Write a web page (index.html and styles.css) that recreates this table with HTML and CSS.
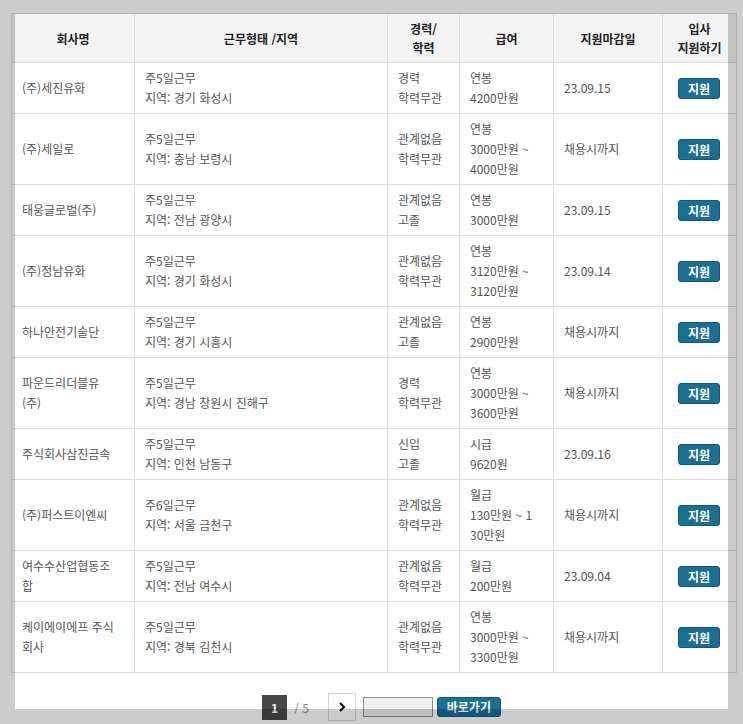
FILE: index.html
```html
<!DOCTYPE html>
<html lang="ko">
<head>
<meta charset="utf-8">
<title>채용정보</title>
<link rel="stylesheet" href="styles.css">
</head>
<body>
<div class="page">
  <table class="jobs">
    <colgroup>
      <col class="c-name"><col class="c-work"><col class="c-career"><col class="c-pay"><col class="c-date"><col class="c-apply">
    </colgroup>
    <thead>
      <tr>
        <th>회사명</th>
        <th>근무형태 /지역</th>
        <th>경력/<br>학력</th>
        <th>급여</th>
        <th>지원마감일</th>
        <th>입사<br>지원하기</th>
      </tr>
    </thead>
    <tbody>
      <tr>
        <td>(주)세진유화</td>
        <td>주5일근무<br>지역: 경기 화성시</td>
        <td>경력<br>학력무관</td>
        <td>연봉<br>4200만원</td>
        <td>23.09.15</td>
        <td class="apply"><button class="btn">지원</button></td>
      </tr>
      <tr>
        <td>(주)세일로</td>
        <td>주5일근무<br>지역: 충남 보령시</td>
        <td>관계없음<br>학력무관</td>
        <td>연봉<br>3000만원 ~<br>4000만원</td>
        <td>채용시까지</td>
        <td class="apply"><button class="btn">지원</button></td>
      </tr>
      <tr>
        <td>태웅글로벌(주)</td>
        <td>주5일근무<br>지역: 전남 광양시</td>
        <td>관계없음<br>고졸</td>
        <td>연봉<br>3000만원</td>
        <td>23.09.15</td>
        <td class="apply"><button class="btn">지원</button></td>
      </tr>
      <tr>
        <td>(주)정남유화</td>
        <td>주5일근무<br>지역: 경기 화성시</td>
        <td>관계없음<br>학력무관</td>
        <td>연봉<br>3120만원 ~<br>3120만원</td>
        <td>23.09.14</td>
        <td class="apply"><button class="btn">지원</button></td>
      </tr>
      <tr>
        <td>하나안전기술단</td>
        <td>주5일근무<br>지역: 경기 시흥시</td>
        <td>관계없음<br>고졸</td>
        <td>연봉<br>2900만원</td>
        <td>채용시까지</td>
        <td class="apply"><button class="btn">지원</button></td>
      </tr>
      <tr>
        <td>파운드리더블유<br>(주)</td>
        <td>주5일근무<br>지역: 경남 창원시 진해구</td>
        <td>경력<br>학력무관</td>
        <td>연봉<br>3000만원 ~<br>3600만원</td>
        <td>채용시까지</td>
        <td class="apply"><button class="btn">지원</button></td>
      </tr>
      <tr>
        <td>주식회사삼진금속</td>
        <td>주5일근무<br>지역: 인천 남동구</td>
        <td>신입<br>고졸</td>
        <td>시급<br>9620원</td>
        <td>23.09.16</td>
        <td class="apply"><button class="btn">지원</button></td>
      </tr>
      <tr>
        <td>(주)퍼스트이엔씨</td>
        <td>주6일근무<br>지역: 서울 금천구</td>
        <td>관계없음<br>학력무관</td>
        <td>월급<br>130만원 ~ 1<br>30만원</td>
        <td>채용시까지</td>
        <td class="apply"><button class="btn">지원</button></td>
      </tr>
      <tr>
        <td>여수수산업협동조<br>합</td>
        <td>주5일근무<br>지역: 전남 여수시</td>
        <td>관계없음<br>학력무관</td>
        <td>월급<br>200만원</td>
        <td>23.09.04</td>
        <td class="apply"><button class="btn">지원</button></td>
      </tr>
      <tr>
        <td>케이에이에프 주식<br>회사</td>
        <td>주5일근무<br>지역: 경북 김천시</td>
        <td>관계없음<br>학력무관</td>
        <td>연봉<br>3000만원 ~<br>3300만원</td>
        <td>채용시까지</td>
        <td class="apply"><button class="btn">지원</button></td>
      </tr>
    </tbody>
  </table>

  <div class="pager">
    <span class="cur">1</span>
    <span class="total">/ 5</span>
    <button class="next" aria-label="다음">
      <svg width="10" height="12" viewBox="0 0 10 12"><polyline points="3,2 7,6 3,10" fill="none" stroke="#111" stroke-width="2.2"/></svg>
    </button>
    <input class="goto" type="text">
    <button class="btn go">바로가기</button>
  </div>
</div>
<div class="dim"></div>
</body>
</html>
```

FILE: styles.css
```css
html, body {
  margin: 0;
  padding: 0;
  background: #fff;
}
body {
  font-family: "Noto Sans CJK KR", "Noto Sans", sans-serif;
  font-size: 12px;
  color: #555;
}
.page {
  padding: 13px 0 0 11px;
}
.jobs {
  border-collapse: collapse;
  table-layout: fixed;
  width: 725px;
}
.c-name { width: 123px; }
.c-work { width: 253px; }
.c-career { width: 72px; }
.c-pay { width: 94px; }
.c-date { width: 109px; }
.c-apply { width: 74px; }

.jobs th,
.jobs td {
  border: 1px solid #dddddd;
  padding: 5px 10px;
  white-space: nowrap;
  vertical-align: middle;
  text-align: left;
}
.jobs th {
  background: #f3f3f3;
  color: #222;
  font-weight: 700;
  line-height: 19px;
  text-align: center;
}
.jobs td {
  line-height: 20px;
}
.jobs td.apply {
  text-align: center;
  padding: 5px 1px 5px 0;
}
.btn {
  font-family: inherit;
  font-size: 12px;
  font-weight: 700;
  color: #fff;
  background: #1a6f95;
  border: 1px solid #10597b;
  border-radius: 3px;
  width: 42px;
  height: 21px;
  padding: 0;
  line-height: 19px;
  cursor: pointer;
}
.pager {
  display: flex;
  align-items: center;
  justify-content: center;
  margin-top: 20px;
  width: 725px;
  padding-left: 16px;
  box-sizing: border-box;
  height: 28px;
}
.cur {
  width: 25px;
  height: 25px;
  background: #484848;
  color: #fff;
  font-weight: 700;
  line-height: 25px;
  text-align: center;
}
.total {
  color: #888;
  margin-left: 7px;
  margin-right: 19px;
}
.next {
  width: 28px;
  height: 28px;
  border: 1px solid #d4d4d4;
  background: #fff;
  padding: 0;
  display: flex;
  align-items: center;
  justify-content: center;
}
.goto {
  width: 70px;
  height: 20px;
  box-sizing: border-box;
  border: 1px solid #8c8c8c;
  background: #efefef;
  margin: 0 0 0 7px;
  padding: 0;
}
.btn.go {
  width: 64px;
  height: 20px;
  margin-left: 4px;
  line-height: 18px;
}
.dim {
  position: fixed;
  inset: 0;
  box-sizing: border-box;
  border-style: solid;
  border-color: rgba(0, 0, 0, 0.2);
  border-width: 14px 15px 15px 15px;
  pointer-events: none;
}
```
